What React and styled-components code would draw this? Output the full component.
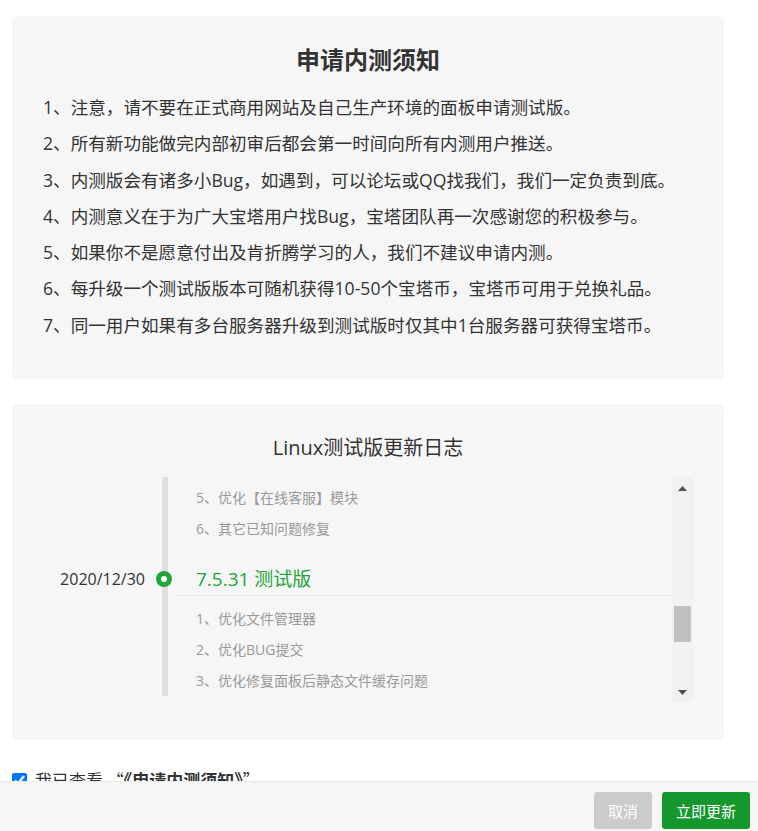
import React from 'react';
import styled, { createGlobalStyle } from 'styled-components';

const notes = [
  '1、注意，请不要在正式商用网站及自己生产环境的面板申请测试版。',
  '2、所有新功能做完内部初审后都会第一时间向所有内测用户推送。',
  '3、内测版会有诸多小Bug，如遇到，可以论坛或QQ找我们，我们一定负责到底。',
  '4、内测意义在于为广大宝塔用户找Bug，宝塔团队再一次感谢您的积极参与。',
  '5、如果你不是愿意付出及肯折腾学习的人，我们不建议申请内测。',
  '6、每升级一个测试版版本可随机获得10-50个宝塔币，宝塔币可用于兑换礼品。',
  '7、同一用户如果有多台服务器升级到测试版时仅其中1台服务器可获得宝塔币。',
];

const log = [
  { type: 'item', text: '5、优化【在线客服】模块', first: true },
  { type: 'item', text: '6、其它已知问题修复' },
  { type: 'version', date: '2020/12/30', text: '7.5.31 测试版' },
  { type: 'item', text: '1、优化文件管理器', after: true },
  { type: 'item', text: '2、优化BUG提交' },
  { type: 'item', text: '3、优化修复面板后静态文件缓存问题' },
];

const App = () => {
  return (
    <>
      <GlobalStyle />
      <Page>
        <Card>
          <Title>申请内测须知</Title>
          <NoteList>
            {notes.map((n) => (
              <Note key={n}>{n}</Note>
            ))}
          </NoteList>
        </Card>

        <Card $log>
          <LogTitle>Linux测试版更新日志</LogTitle>
          <LogBox>
            <Timeline>
              {log.map((row, i) => (
                <Row key={i} $first={row.first}>
                  <DateCell>{row.date}</DateCell>
                  <Rail>{row.type === 'version' && <Dot />}</Rail>
                  {row.type === 'version' ? (
                    <Version>{row.text}</Version>
                  ) : (
                    <Entry $after={row.after}>{row.text}</Entry>
                  )}
                </Row>
              ))}
            </Timeline>
            <Scrollbar>
              <Arrow viewBox="0 0 9 5" width="9" height="5">
                <path d="M4.5 0 L9 5 L0 5 Z" fill="#505050" />
              </Arrow>
              <Track>
                <Thumb />
              </Track>
              <Arrow viewBox="0 0 9 5" width="9" height="5">
                <path d="M0 0 L9 0 L4.5 5 Z" fill="#505050" />
              </Arrow>
            </Scrollbar>
          </LogBox>
        </Card>

        <Agree>
          <Check type="checkbox" defaultChecked />
          <span>
            我已查看 “<b>《申请内测须知》</b>”
          </span>
        </Agree>
      </Page>

      <Footer>
        <Button $cancel>取消</Button>
        <Button>立即更新</Button>
      </Footer>
    </>
  );
};

const GlobalStyle = createGlobalStyle`
  body {
    margin: 0;
    background: #fff;
    font-family: "Open Sans", "Noto Sans CJK SC", sans-serif;
    color: #333;
  }
`;

const Page = styled.div`
  padding: 16px 34px 0 12px;
  display: flex;
  flex-direction: column;
  gap: 25px;
`;

const Card = styled.div`
  background: #f6f6f6;
  border-radius: 6px;
  padding: ${(p) => (p.$log ? '29px 31px 38px 0' : '26px 31px 36px 31px')};
  height: ${(p) => (p.$log ? '336px' : '363px')};
  box-sizing: border-box;
`;

const Title = styled.h2`
  margin: 0;
  text-align: center;
  font-size: 24px;
  line-height: 36px;
  font-weight: bold;
  color: #333;
`;

const NoteList = styled.ul`
  list-style: none;
  margin: 11px -20px 0 0;
  padding: 0;
`;

const Note = styled.li`
  font-size: 17.6px;
  line-height: 36.3px;
  color: #333;
  white-space: nowrap;
`;

const LogTitle = styled.h3`
  margin: 0 0 14px;
  text-align: center;
  font-size: 20px;
  line-height: 30px;
  font-weight: normal;
  color: #333;
  padding-left: 31px;
`;

const LogBox = styled.div`
  display: flex;
  height: 225px;
`;

const Timeline = styled.div`
  flex: 1;
  overflow: hidden;
`;

const Row = styled.div`
  display: grid;
  grid-template-columns: 150px 6px 1fr;
  padding-top: ${(p) => (p.$first ? '5px' : '0')};
  background: linear-gradient(#dfdfdf, #dfdfdf) 150px 0 / 6px 100% no-repeat;
`;

const DateCell = styled.div`
  align-self: end;
  text-align: right;
  padding-right: 17px;
  padding-bottom: 7px;
  font-size: 16px;
  line-height: 20px;
  color: #333;
`;

const Rail = styled.div`
  position: relative;
  width: 6px;
`;

const Dot = styled.span`
  position: absolute;
  left: -6px;
  bottom: 9px;
  width: 6px;
  height: 6px;
  border: 5px solid #20a53a;
  border-radius: 50%;
  background: #fff;
`;

const Entry = styled.div`
  margin-left: 9px;
  padding-left: 19px;
  padding-top: ${(p) => (p.$after ? '6.5px' : '0')};
  font-size: 14px;
  line-height: 31px;
  color: #999;
  white-space: nowrap;
`;

const Version = styled.div`
  margin-left: 9px;
  padding: 20px 0 0 19px;
  font-size: 19px;
  line-height: 30px;
  color: #20a53a;
  border-bottom: 1px solid #e6e6e6;
  height: 31px;
`;

const Scrollbar = styled.div`
  width: 21px;
  background: #f1f1f1;
  display: flex;
  flex-direction: column;
  align-items: center;
  padding: 9px 0 7px;
  box-sizing: border-box;
`;

const Arrow = styled.svg`
  display: block;
  flex: none;
`;

const Track = styled.div`
  flex: 1;
  align-self: stretch;
  margin: 0 2px;
  padding-top: 115px;
`;

const Thumb = styled.div`
  height: 36px;
  background: #c1c1c1;
`;

const Agree = styled.label`
  display: flex;
  align-items: center;
  gap: 8px;
  margin-top: 4px;
  font-family: "Noto Sans CJK SC", sans-serif;
  font-size: 17px;
  line-height: 22px;
  color: #333;

  b {
    font-weight: bold;
  }
`;

const Check = styled.input`
  width: 15px;
  height: 15px;
  margin: 0;
  accent-color: #0075ff;
`;

const Footer = styled.div`
  position: fixed;
  left: 0;
  right: 0;
  bottom: 0;
  height: 50px;
  box-sizing: border-box;
  border-top: 1px solid #e8eaea;
  background: #f5f6f6;
  display: flex;
  justify-content: flex-end;
  align-items: flex-start;
  gap: 10px;
  padding: 10px 8px 0 0;
`;

const Button = styled.button`
  height: 37px;
  padding: 0 14px;
  min-width: ${(p) => (p.$cancel ? '58px' : '88px')};
  border: none;
  border-radius: 3px;
  background: ${(p) => (p.$cancel ? '#cbcbcb' : '#14982e')};
  color: #fff;
  font-family: "Open Sans", "Noto Sans CJK SC", sans-serif;
  font-size: 15px;
  cursor: pointer;
`;

export default App;
